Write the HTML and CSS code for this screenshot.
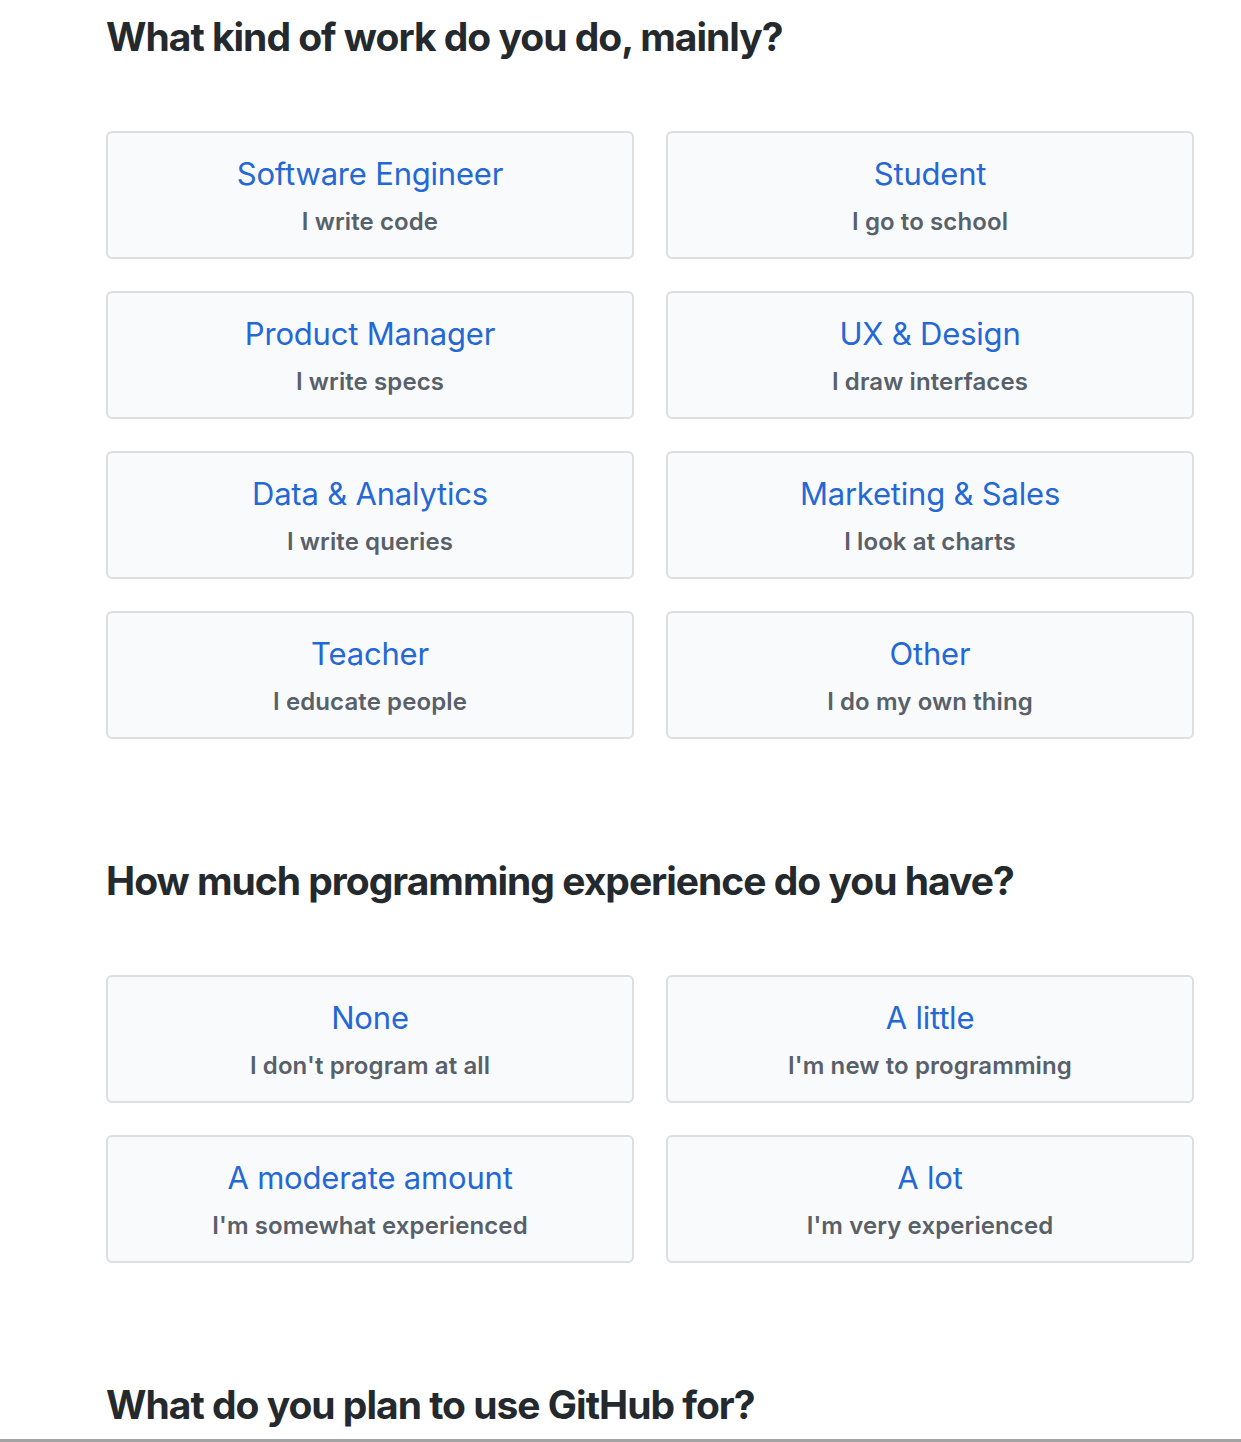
FILE: index.html
```html
<!DOCTYPE html>
<html lang="en">
<head>
<meta charset="utf-8">
<title>Survey</title>
<link rel="stylesheet" href="styles.css">
</head>
<body>
<main class="page">
  <section class="question q-work">
    <h2 class="question-title">What kind of work do you do, mainly?</h2>
    <div class="options">
      <button class="option"><span class="option-title">Software Engineer</span><span class="option-desc">I write code</span></button>
      <button class="option"><span class="option-title">Student</span><span class="option-desc">I go to school</span></button>
      <button class="option"><span class="option-title">Product Manager</span><span class="option-desc">I write specs</span></button>
      <button class="option"><span class="option-title">UX &amp; Design</span><span class="option-desc">I draw interfaces</span></button>
      <button class="option"><span class="option-title">Data &amp; Analytics</span><span class="option-desc">I write queries</span></button>
      <button class="option"><span class="option-title">Marketing &amp; Sales</span><span class="option-desc">I look at charts</span></button>
      <button class="option"><span class="option-title">Teacher</span><span class="option-desc">I educate people</span></button>
      <button class="option"><span class="option-title">Other</span><span class="option-desc">I do my own thing</span></button>
    </div>
  </section>
  <section class="question q-exp">
    <h2 class="question-title">How much programming experience do you have?</h2>
    <div class="options">
      <button class="option"><span class="option-title">None</span><span class="option-desc">I don't program at all</span></button>
      <button class="option"><span class="option-title">A little</span><span class="option-desc">I'm new to programming</span></button>
      <button class="option"><span class="option-title">A moderate amount</span><span class="option-desc">I'm somewhat experienced</span></button>
      <button class="option"><span class="option-title">A lot</span><span class="option-desc">I'm very experienced</span></button>
    </div>
  </section>
  <section class="question q-use">
    <h2 class="question-title">What do you plan to use GitHub for?</h2>
  </section>
</main>
<div class="window-edge"></div>
</body>
</html>
```
FILE: styles.css
```css
html, body {
  margin: 0;
  padding: 0;
  background: #ffffff;
}
body {
  font-family: Inter, "Noto Sans", "Liberation Sans", sans-serif;
  color: #24292e;
  height: 1442px;
  overflow: hidden;
  display: flex;
  flex-direction: column;
}
.page {
  flex: 1;
  padding: 0 47px 0 106px;
}
.question-title {
  margin: 0;
  font-size: 39px;
  font-weight: 700;
  line-height: 48px;
  letter-spacing: -1px;
  color: #24292e;
}
.q-work {
  padding-top: 13px;
}
.q-work .question-title { margin-bottom: 70px; }
.q-exp { margin-top: 118px; }
.q-exp .question-title { margin-bottom: 70px; }
.q-use { margin-top: 118px; }
.options {
  display: grid;
  grid-template-columns: 528px 528px;
  column-gap: 32px;
  row-gap: 32px;
}
.option {
  box-sizing: border-box;
  height: 128px;
  margin: 0;
  padding: 0;
  border: 2px solid #dcdee1;
  border-radius: 6px;
  background: #f9fafb;
  font-family: inherit;
  display: flex;
  flex-direction: column;
  align-items: center;
  justify-content: center;
  cursor: pointer;
}
.option-title {
  font-size: 31px;
  font-weight: 400;
  line-height: 40px;
  color: #2468d6;
  letter-spacing: -0.2px;
}
.option-desc {
  margin-top: 13px;
  font-size: 24px;
  font-weight: 600;
  line-height: 30px;
  color: #586069;
  letter-spacing: 0.1px;
}
.window-edge {
  height: 3px;
  background: #a3a3a3;
}
```
